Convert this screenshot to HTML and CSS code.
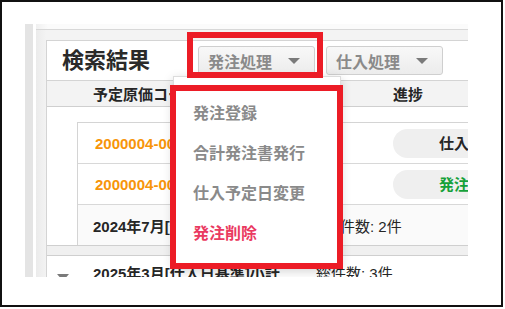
FILE: index.html
```html
<!DOCTYPE html>
<html lang="ja">
<head>
    <meta charset="UTF-8">
    <meta name="viewport" content="width=device-width, initial-scale=1.0">
    <title>検索結果</title>
    <link rel="stylesheet" href="styles.css">
</head>
<body>
    <div class="frame">
        <div class="shot">
            <div class="side-strip"></div>
            <div class="side-gap"></div>
            <div class="panel">
                <div class="panel-inner">
                    <div class="card">
                        <div class="card-head">
                            <h2 class="title">検索結果</h2>
                            <div class="head-buttons">
                                <button class="drop-btn btn-order">発注処理 <span class="caret"></span></button>
                                <button class="drop-btn btn-stock">仕入処理 <span class="caret"></span></button>
                            </div>
                        </div>

                        <div class="col-head">
                            <div class="col col-code">予定原価コード</div>
                            <div class="col col-status">進捗</div>
                        </div>
                        <div class="spacer"></div>

                        <div class="group-body">
                            <div class="inner-table">
                                <div class="row">
                                    <div class="cell-code">2000004-0001</div>
                                    <div class="pill">仕入済</div>
                                </div>
                                <div class="row">
                                    <div class="cell-code">2000004-0002</div>
                                    <div class="pill pill-green">発注済</div>
                                </div>
                                <div class="row row-sum">
                                    <div class="sum-label">2024年7月[仕入日基準]小計</div>
                                    <div class="sum-count">総件数: 2件</div>
                                </div>
                            </div>
                        </div>
                        <div class="band"></div>

                        <div class="subtotal">
                            <span class="sub-caret"></span>
                            <div class="sum-label">2025年3月[仕入日基準]小計</div>
                            <div class="sum-count">総件数: 3件</div>
                        </div>
                    </div>
                </div>
            </div>

            <!-- ドロップダウン -->
            <div class="menu">
                <div class="menu-item">発注登録</div>
                <div class="menu-item">合計発注書発行</div>
                <div class="menu-item">仕入予定日変更</div>
                <div class="menu-item menu-danger">発注削除</div>
            </div>

            <!-- 注釈の赤枠 -->
            <div class="mark mark-button"></div>
            <div class="mark mark-menu"></div>
        </div>
    </div>
</body>
</html>
```

FILE: styles.css
```css
:root {
    --line-color: #d4d4d4;
    --mark-red: #ec1c26;
    --orange: #f7950a;
    --green: #15a13a;
    --text-dark: #262626;
    --text-gray: #8a8a8a;
}

body {
    margin: 0;
    background: #fff;
    font-family: 'Liberation Sans', 'Noto Sans CJK JP', sans-serif;
    color: var(--text-dark);
}

.frame {
    width: 503px;
    height: 307px;
    box-sizing: border-box;
    border: 2px solid #111;
    padding: 22px 0 0 23px;
}

.shot {
    position: relative;
    display: flex;
    width: 443px;
    height: 253px;
    overflow: hidden;
}

.side-strip {
    width: 8px;
    flex-shrink: 0;
    background: #e4e4e4;
}

.side-gap {
    width: 3px;
    flex-shrink: 0;
}

.panel {
    flex: 1;
    padding-top: 5px;
    background: linear-gradient(90deg, #f0f0f0 0, #fbfbfb 12px);
}

.panel-inner {
    border-top: 1px solid #d8d8d8;
    padding: 10px 0 0 10px;
    background: linear-gradient(90deg, #ebebeb 0, #f3f3f3 10px);
    height: 100%;
}

.card {
    width: 470px;
    background: #fff;
    border: 1px solid var(--line-color);
}

.card-head {
    display: flex;
    align-items: center;
    height: 39px;
    padding-left: 15px;
    border-bottom: 1px solid var(--line-color);
}

.title {
    margin: 0;
    font-size: 22px;
    line-height: 30px;
    font-weight: bold;
    color: #2a2a2a;
}

.head-buttons {
    display: flex;
    gap: 11px;
    margin-left: 48px;
}

.drop-btn {
    display: flex;
    align-items: center;
    gap: 16px;
    height: 29px;
    padding: 0 14px 0 9px;
    font-family: inherit;
    font-size: 16px;
    font-weight: bold;
    color: var(--text-gray);
    background: linear-gradient(#f8f8f8, #ececec);
    border: 1px solid #cfcfcf;
    border-radius: 3px;
}

.caret {
    width: 0;
    height: 0;
    border-left: 6px solid transparent;
    border-right: 6px solid transparent;
    border-top: 6px solid #7a7a7a;
}

.col-head {
    display: flex;
    align-items: center;
    height: 25px;
    background: #f3f3f3;
    border-bottom: 1px solid #cfcfcf;
    font-size: 15px;
    font-weight: bold;
}

.col-code {
    width: 300px;
    flex-shrink: 0;
    padding-left: 46px;
}

.spacer {
    height: 15px;
}

.group-body {
    padding-left: 30px;
}

.inner-table {
    border: 1px solid var(--line-color);
    border-right: none;
    border-bottom: none;
}

.row {
    display: flex;
    align-items: center;
    height: 40px;
    border-bottom: 1px solid #d8d8d8;
    font-size: 15px;
    font-weight: bold;
}

.cell-code {
    width: 298px;
    flex-shrink: 0;
    padding-left: 17px;
    color: var(--orange);
}

.pill {
    width: 90px;
    flex-shrink: 0;
    height: 29px;
    line-height: 29px;
    padding-left: 46px;
    background: #efefef;
    border-radius: 15px;
}

.pill-green {
    color: var(--green);
}

.row-sum {
    background: #fafafa;
    border-bottom: none;
}

.sum-label {
    width: 232px;
    flex-shrink: 0;
    padding-left: 15px;
    font-size: 15px;
    font-weight: bold;
}

.sum-count {
    flex-shrink: 0;
    font-size: 15px;
    font-weight: normal;
}

.band {
    height: 9px;
    background: #f0f0f0;
    border-top: 1px solid #cfcfcf;
    border-bottom: 1px solid #cfcfcf;
}

.subtotal {
    display: flex;
    align-items: center;
    height: 32px;
    padding-left: 10px;
}

.sub-caret {
    width: 0;
    height: 0;
    margin-top: 10px;
    border-left: 6px solid transparent;
    border-right: 6px solid transparent;
    border-top: 7px solid #7a7a7a;
}

.subtotal .sum-label {
    width: 223px;
    padding-left: 24px;
}

/* ドロップダウンメニュー */
.menu {
    position: absolute;
    left: 148px;
    top: 52px;
    width: 168px;
    height: 192px;
    box-sizing: border-box;
    padding-top: 17px;
    background: #fff;
    border: 1px solid #dcdcdc;
    box-shadow: 0 3px 10px rgba(0, 0, 0, 0.18);
}

.menu-item {
    height: 40px;
    line-height: 40px;
    padding-left: 19px;
    font-size: 16px;
    font-weight: bold;
    color: var(--text-gray);
    white-space: nowrap;
}

.menu-danger {
    color: #ea3a61;
}

/* 赤枠 */
.mark {
    position: absolute;
    box-sizing: border-box;
    border: 6px solid var(--mark-red);
}

.mark-button {
    left: 162px;
    top: 8px;
    width: 136px;
    height: 46px;
}

.mark-menu {
    left: 145px;
    top: 61px;
    width: 173px;
    height: 184px;
}
```
